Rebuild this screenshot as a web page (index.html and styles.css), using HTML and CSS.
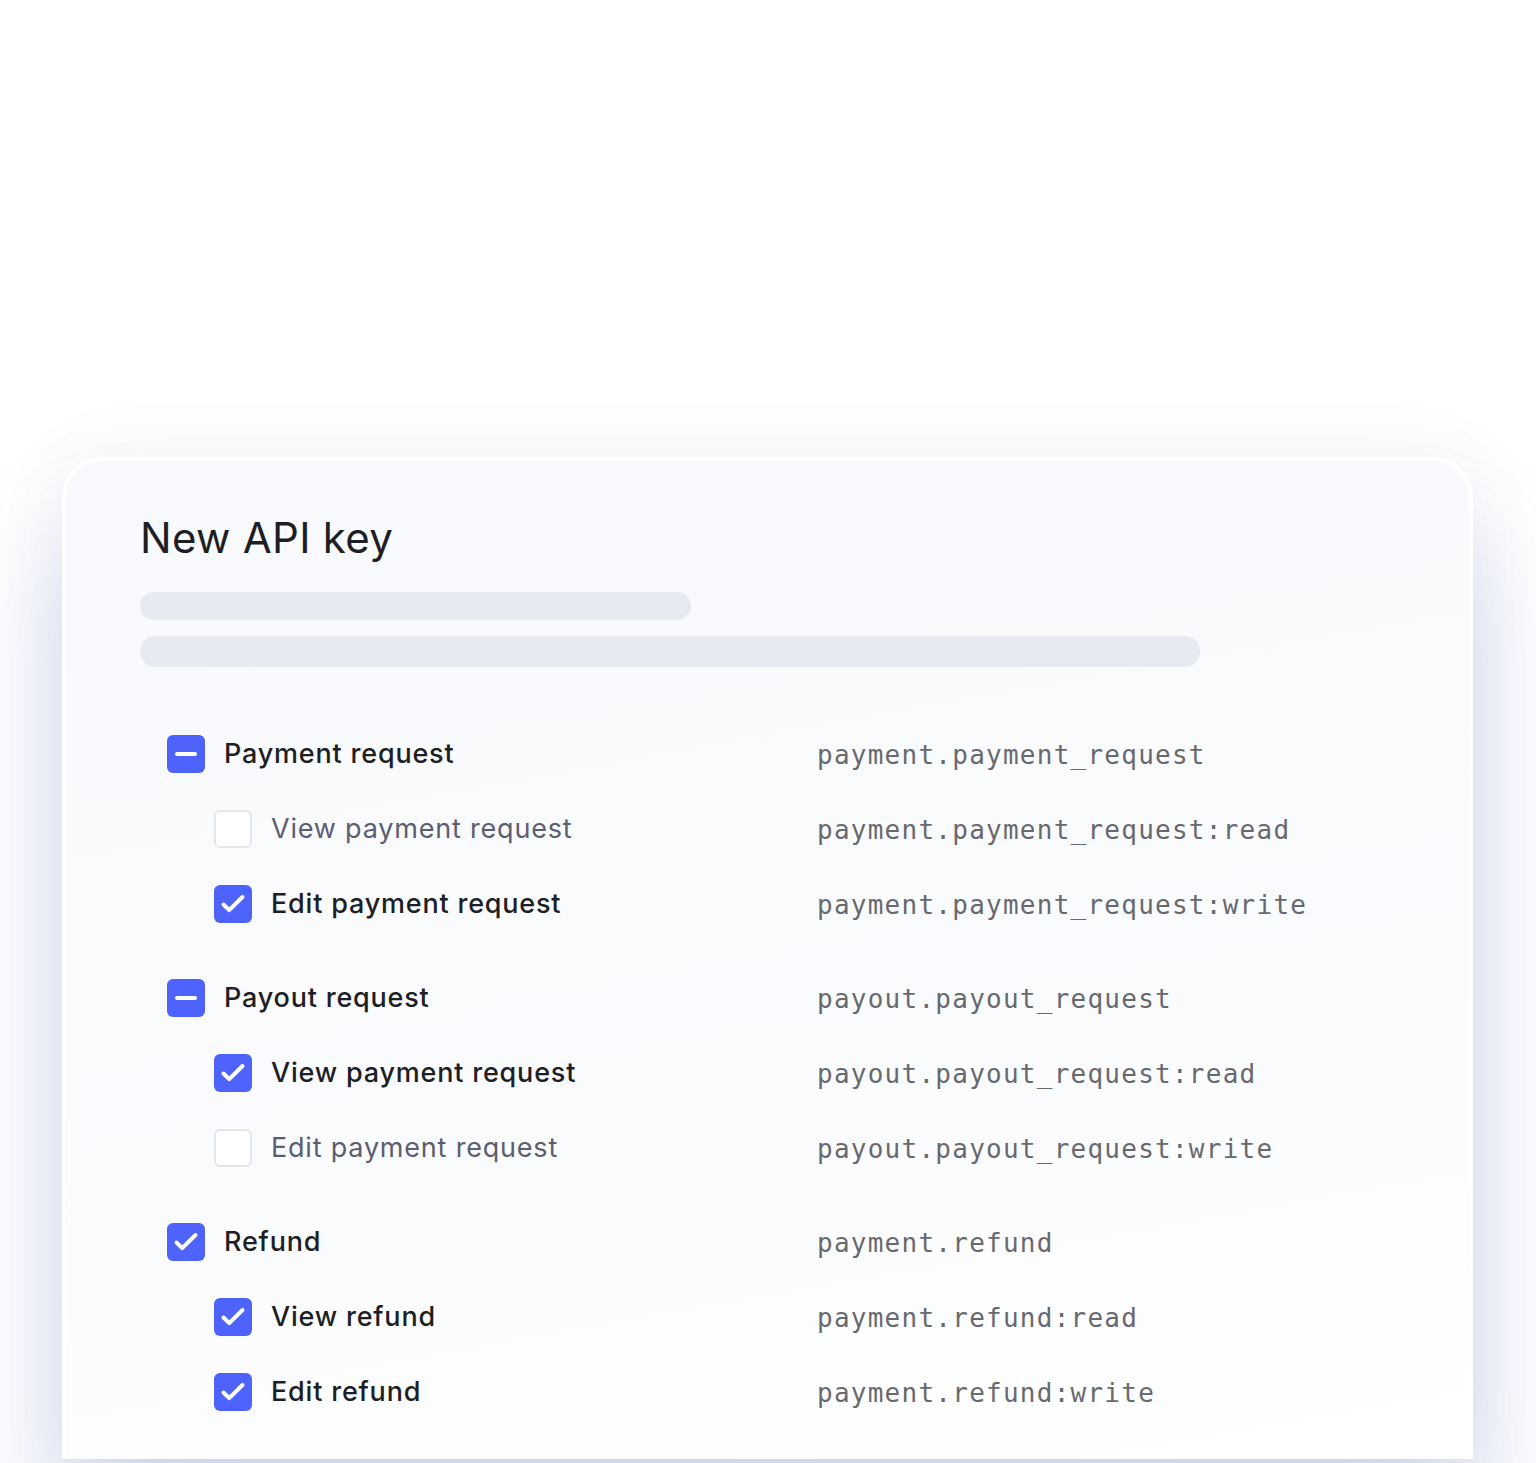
FILE: index.html
```html
<!DOCTYPE html>
<html>
<head>
<meta charset="utf-8">
<link rel="stylesheet" href="styles.css">
</head>
<body>
<div class="page">
  <div class="card">
    <h1 class="title">New API key</h1>
    <div class="skeleton short"></div>
    <div class="skeleton long"></div>

    <div class="groups">
      <div class="group">
        <div class="row parent">
          <div class="label"><span class="box indeterminate"><span class="minus"></span></span><span class="text on">Payment request</span></div>
          <div class="code">payment.payment_request</div>
        </div>
        <div class="row child">
          <div class="label"><span class="box empty"></span><span class="text off">View payment request</span></div>
          <div class="code">payment.payment_request:read</div>
        </div>
        <div class="row child">
          <div class="label"><span class="box checked"><svg viewBox="0 0 38 38"><path d="M9.5 19.5 L15.2 25.2 L28.5 12"/></svg></span><span class="text on">Edit payment request</span></div>
          <div class="code">payment.payment_request:write</div>
        </div>
      </div>

      <div class="group">
        <div class="row parent">
          <div class="label"><span class="box indeterminate"><span class="minus"></span></span><span class="text on">Payout request</span></div>
          <div class="code">payout.payout_request</div>
        </div>
        <div class="row child">
          <div class="label"><span class="box checked"><svg viewBox="0 0 38 38"><path d="M9.5 19.5 L15.2 25.2 L28.5 12"/></svg></span><span class="text on">View payment request</span></div>
          <div class="code">payout.payout_request:read</div>
        </div>
        <div class="row child">
          <div class="label"><span class="box empty"></span><span class="text off">Edit payment request</span></div>
          <div class="code">payout.payout_request:write</div>
        </div>
      </div>

      <div class="group">
        <div class="row parent">
          <div class="label"><span class="box checked"><svg viewBox="0 0 38 38"><path d="M9.5 19.5 L15.2 25.2 L28.5 12"/></svg></span><span class="text on">Refund</span></div>
          <div class="code">payment.refund</div>
        </div>
        <div class="row child">
          <div class="label"><span class="box checked"><svg viewBox="0 0 38 38"><path d="M9.5 19.5 L15.2 25.2 L28.5 12"/></svg></span><span class="text on">View refund</span></div>
          <div class="code">payment.refund:read</div>
        </div>
        <div class="row child">
          <div class="label"><span class="box checked"><svg viewBox="0 0 38 38"><path d="M9.5 19.5 L15.2 25.2 L28.5 12"/></svg></span><span class="text on">Edit refund</span></div>
          <div class="code">payment.refund:write</div>
        </div>
      </div>
    </div>
  </div>
</div>
</body>
</html>
```

FILE: styles.css
```css
html, body {
  margin: 0;
  padding: 0;
  background: #ffffff;
}
body {
  width: 1536px;
  height: 1463px;
  overflow: hidden;
  font-family: "Inter", "Noto Sans", sans-serif;
}
.page {
  padding-top: 457px;
  padding-left: 62px;
}
.card {
  box-sizing: border-box;
  width: 1411px;
  height: 1002px;
  border: 4px solid #ffffff;
  border-bottom: none;
  border-radius: 40px 40px 0 0;
  background: linear-gradient(170deg, #f8f9fc 0%, #fafbfd 60%, #ffffff 100%);
  box-shadow: 0 80px 110px 0 rgba(85, 105, 185, 0.26), 0 0 70px 0 rgba(90, 100, 150, 0.07);
  padding: 52px 74px 0 74px;
}
.title {
  margin: 0;
  font-size: 42px;
  line-height: 50px;
  font-weight: 400;
  color: #1e1f24;
  letter-spacing: 0.3px;
}
.skeleton {
  background: #e8eaf1;
  border-radius: 16px;
}
.skeleton.short {
  width: 551px;
  height: 28px;
  margin-top: 29px;
}
.skeleton.long {
  width: 1060px;
  height: 31px;
  margin-top: 16px;
}
.groups {
  margin-top: 67px;
  display: flex;
  flex-direction: column;
  gap: 56px;
}
.group {
  display: flex;
  flex-direction: column;
  gap: 37px;
}
.row {
  display: grid;
  grid-template-columns: 677px 1fr;
  align-items: center;
  height: 38px;
}
.label {
  display: flex;
  align-items: center;
}
.row.parent .label { padding-left: 27px; }
.row.child .label { padding-left: 74px; }
.box {
  box-sizing: border-box;
  width: 38px;
  height: 38px;
  border-radius: 6px;
  flex: none;
  display: flex;
  align-items: center;
  justify-content: center;
}
.box.checked, .box.indeterminate {
  background: #4d63fb;
}
.box.empty {
  background: #ffffff;
  border: 2px solid #e3e6ee;
}
.box svg {
  width: 38px;
  height: 38px;
  display: block;
}
.box svg path {
  fill: none;
  stroke: #ffffff;
  stroke-width: 4;
  stroke-linecap: round;
  stroke-linejoin: round;
}
.minus {
  width: 22px;
  height: 4.5px;
  border-radius: 3px;
  background: #ffffff;
}
.text {
  margin-left: 19px;
  font-size: 27px;
  line-height: 38px;
  letter-spacing: 0.8px;
  white-space: nowrap;
}
.text.on {
  font-weight: 500;
  color: #1e1f24;
}
.text.off {
  font-weight: 400;
  color: #5b5e70;
}
.code {
  font-family: "DejaVu Sans Mono", "Liberation Mono", monospace;
  font-size: 26px;
  line-height: 38px;
  letter-spacing: 1.25px;
  color: #68696e;
  white-space: nowrap;
  padding-top: 2px;
}
```
